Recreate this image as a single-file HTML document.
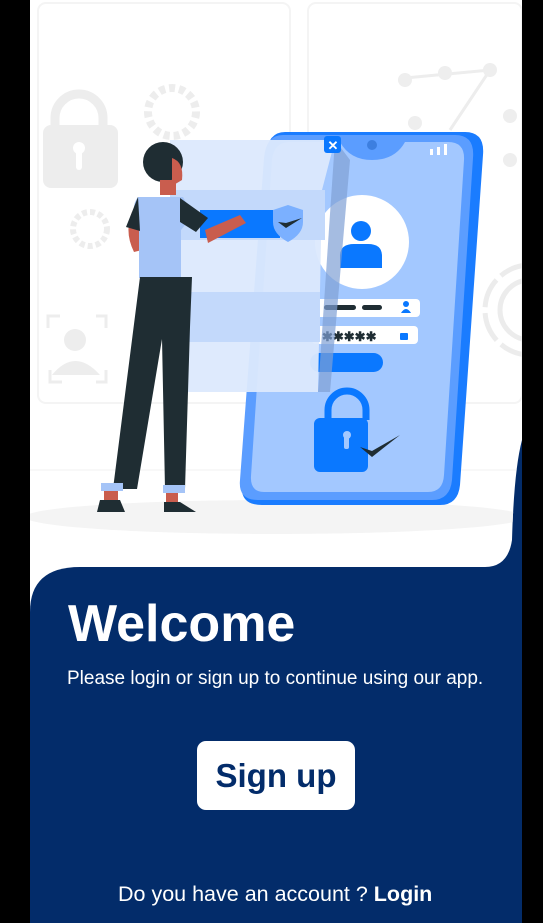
<!DOCTYPE html>
<html><head><meta charset="utf-8"><style>
body{margin:0;background:#000;width:543px;height:923px;overflow:hidden;font-family:"Liberation Sans",Arial,sans-serif;position:relative}
svg{position:absolute;left:0;top:0}
.t{position:absolute;color:#fff;white-space:nowrap}
</style></head><body>
<svg width="543" height="923" viewBox="0 0 543 923">
<defs><clipPath id="c"><path d="M30 0H522V440Q514 470 512 540Q508 567 485 567H30Z"/></clipPath></defs>
<rect x="470" y="430" width="52" height="160" fill="#032c6a"/>
<path d="M30 0H522V440Q514 470 512 540Q508 567 485 567H30Z" fill="#fff"/>
<rect x="30" y="560" width="80" height="60" fill="#fff"/>
<path d="M30 612Q30 567 80 567H522V923H30Z" fill="#032c6a"/>
<g clip-path="url(#c)">
<rect x="38" y="3" width="252" height="400" rx="8" fill="none" stroke="#f4f4f4" stroke-width="2"/>
<rect x="308" y="3" width="214" height="400" rx="8" fill="none" stroke="#f4f4f4" stroke-width="2"/>
<line x1="30" y1="470" x2="522" y2="470" stroke="#f2f2f2"/>
<ellipse cx="275" cy="517" rx="250" ry="17" fill="#f4f4f4"/>
<path d="M55 130V118a24 24 0 0 1 48 0V130" fill="none" stroke="#ededed" stroke-width="9"/>
<rect x="43" y="125" width="75" height="63" rx="8" fill="#ededed"/>
<circle cx="79" cy="148" r="6" fill="#fff"/><rect x="76" y="150" width="6" height="20" rx="3" fill="#fff"/>
<circle cx="172" cy="112" r="24" fill="none" stroke="#ededed" stroke-width="8" stroke-dasharray="6 4"/>
<circle cx="90" cy="229" r="17" fill="none" stroke="#ededed" stroke-width="6" stroke-dasharray="5 3"/>
<circle cx="75" cy="340" r="11" fill="#ededed"/><path d="M52 375q23-28 48 0z" fill="#ededed"/>
<path d="M48 328v-12h12M96 316h10v12M50 370v12h12M96 382h10v-12" stroke="#ededed" stroke-width="3" fill="none"/>
<path d="M405 78L490 70L450 130" stroke="#ededed" stroke-width="3" fill="none"/>
<circle cx="405" cy="80" r="7" fill="#eee"/><circle cx="445" cy="73" r="7" fill="#eee"/><circle cx="490" cy="70" r="7" fill="#eee"/>
<circle cx="415" cy="123" r="7" fill="#eee"/><circle cx="510" cy="116" r="7" fill="#eee"/><circle cx="510" cy="160" r="7" fill="#eee"/>
<circle cx="530" cy="310" r="45" fill="none" stroke="#ececec" stroke-width="5" stroke-dasharray="30 6"/>
<circle cx="530" cy="310" r="30" fill="none" stroke="#ececec" stroke-width="5"/>
</g>
<path d="M285 132H465Q485 132 483 155L460 485Q458 505 440 505H262Q240 505 242 485L266 155Q268 132 285 132Z" fill="#1a7cff"/>
<path d="M283 135H455Q475 135 473 158L452 480Q450 500 432 500H258Q238 500 240 480L264 158Q266 135 283 135Z" fill="#5b9dff"/>
<path d="M290 142H340Q350 160 372 160Q395 160 405 142H448Q465 142 464 160L444 475Q443 492 428 492H264Q250 492 251 476L272 160Q274 142 290 142Z" fill="#a3c8ff"/>
<circle cx="372" cy="145" r="5" fill="#3d7fe0"/>
<rect x="430" y="149" width="3" height="6" fill="#fff"/><rect x="437" y="147" width="3" height="8" fill="#fff"/><rect x="444" y="144" width="3" height="11" fill="#fff"/>
<circle cx="362" cy="242" r="47" fill="#fff"/>
<circle cx="361" cy="231" r="10" fill="#0a78ff"/><path d="M340 268v-12q0-12 14-12h14q14 0 14 12v12z" fill="#0a78ff"/>
<rect x="312" y="299" width="108" height="18" rx="4" fill="#fff"/>
<rect x="324" y="305" width="32" height="5" rx="2.5" fill="#1f2d33"/><rect x="362" y="305" width="20" height="5" rx="2.5" fill="#1f2d33"/>
<circle cx="406" cy="304" r="3" fill="#0a78ff"/><path d="M401 313q5-8 10 0z" fill="#0a78ff"/>
<rect x="312" y="326" width="106" height="18" rx="4" fill="#fff"/>
<text x="322" y="341" font-size="13" font-weight="bold" fill="#1f2d33">✱✱✱✱✱</text>
<rect x="400" y="333" width="8" height="7" rx="1" fill="#0a78ff"/>
<rect x="310" y="353" width="73" height="19" rx="9.5" fill="#0a78ff"/>
<path d="M328 420v-10a19 19 0 0 1 38 0v10" fill="none" stroke="#0a78ff" stroke-width="7"/>
<rect x="314" y="418" width="54" height="54" rx="6" fill="#0a78ff"/>
<circle cx="347" cy="435" r="4" fill="#a3c8ff"/><rect x="344" y="436" width="5" height="13" rx="2" fill="#a3c8ff"/>
<path d="M360 447l12 10l28-22l-28 16z" fill="#1f2d33"/>
<path d="M170 140H335L322 190L318 392H170Z" fill="#dce9fd" opacity=".95"/>
<rect x="170" y="190" width="155" height="50" fill="#c3d9fb"/>
<rect x="170" y="292" width="150" height="50" fill="#c3d9fb"/>
<path d="M335 140L350 160L330 392H318Z" fill="#7fa0d4" opacity=".7"/>
<rect x="200" y="210" width="80" height="28" fill="#0a78ff"/>
<path d="M273 210l15-5l15 5v12q0 12-15 20q-15-8-15-20z" fill="#7bb0ff"/>
<path d="M278 222l8 6l16-10l-16 5z" fill="#1f2d33"/>
<rect x="324" y="136" width="17" height="17" rx="3" fill="#0a78ff"/>
<text x="327.5" y="150" font-size="13" font-weight="bold" fill="#fff">✕</text>
<circle cx="163" cy="162" r="20" fill="#1f2d33"/>
<path d="M172 158q12 4 10 22l-10 6z" fill="#c95d4e"/>
<path d="M160 180h16v15h-16z" fill="#c95d4e"/>
<path d="M132 212q-8 20 2 40l8-2q-6-18 0-36z" fill="#c95d4e"/>
<path d="M205 230l35-15l6 8l-38 20z" fill="#c95d4e"/>
<path d="M138 197h45l10 18l-12 15v48h-42v-50q-10-20 -1-31z" fill="#a5c4f7"/>
<path d="M138 197l-12 30l14 4z" fill="#1f2d33"/><path d="M180 198l28 20l-12 14l-16-10z" fill="#1f2d33"/>
<path d="M140 277h52l-2 50l-5 162h-20l-3-150l-25 150h-24l14-110z" fill="#1f2d33"/>
<rect x="101" y="483" width="22" height="8" fill="#a5c4f7"/><rect x="163" y="485" width="22" height="8" fill="#a5c4f7"/>
<rect x="104" y="491" width="14" height="10" fill="#c95d4e"/><rect x="166" y="493" width="12" height="10" fill="#c95d4e"/>
<path d="M100 500h20l5 12h-28z" fill="#1f2d33"/><path d="M164 502h16l16 10h-32z" fill="#1f2d33"/>
</svg>
<div class="t" style="left:68px;top:594px;font-size:52px;font-weight:bold">Welcome</div>
<div class="t" style="left:67px;top:668px;font-size:19px">Please login or sign up to continue using our app.</div>
<div style="position:absolute;left:197px;top:741px;width:158px;height:69px;background:#fff;border-radius:9px;color:#032c6a;font-size:33px;font-weight:bold;text-align:center;line-height:69px">Sign up</div>
<div class="t" style="left:118px;top:882px;font-size:21.5px">Do you have an account ? <b>Login</b></div>
</body></html>
